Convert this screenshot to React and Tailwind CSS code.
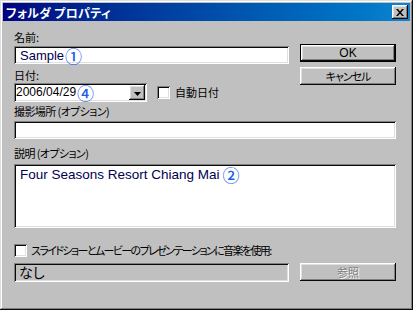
const sunken =
  "shadow-[inset_1px_1px_#808080,inset_-1px_-1px_#ffffff,inset_2px_2px_#0a0a0a,inset_-2px_-2px_#dfdfdf]";
const raised =
  "shadow-[inset_-1px_-1px_#0a0a0a,inset_1px_1px_#ffffff,inset_-2px_-2px_#808080,inset_2px_2px_#dfdfdf]";
const jp = "font-['Noto_Sans_CJK_JP',sans-serif] [font-feature-settings:'palt']";
const circ = "font-['Noto_Sans_CJK_JP',sans-serif] font-medium text-[#1f5fe8]";

function Checkbox() {
  return <div className={`w-[13px] h-[13px] bg-white shrink-0 ${sunken}`} />;
}

export default function App() {
  return (
    <div className="w-[413px] h-[310px] bg-[#c0c0c0] p-[3px] flex flex-col shadow-[inset_-1px_-1px_#0a0a0a,inset_1px_1px_#dfdfdf,inset_-2px_-2px_#808080,inset_2px_2px_#ffffff]">
      {/* Title bar */}
      <div className="h-[18px] flex items-center justify-between pl-[3px] pr-[2px] bg-linear-to-r from-[#000080] to-[#1084d0]">
        <span className={`${jp} text-white font-bold text-[12px] leading-[13px] tracking-[0.3px]`}>
          フォルダ プロパティ
        </span>
        <div className={`w-[16px] h-[14px] bg-[#c0c0c0] flex items-center justify-center ${raised}`}>
          <svg width="8" height="7" viewBox="0 0 8 7">
            <path d="M0 0h2l2 2.5L6 0h2L5 3.5 8 7H6L4 4.5 2 7H0l3-3.5z" fill="#000" />
          </svg>
        </div>
      </div>

      {/* Body */}
      <div className="flex-1 flex flex-col pl-[11px] pr-[14px] text-black">
        <div className="flex">
          <div className="w-[275px] flex flex-col">
            <div className={`${jp} mt-[10px] h-[13px] text-[11px] leading-[13px]`}>名前:</div>
            <div className={`mt-[2px] h-[18px] bg-white flex items-center pl-[6px] ${sunken}`}>
              <span className="font-['Liberation_Sans',sans-serif] text-[13px] text-[#000050] leading-[14px] mt-[2px]">
                Sample
              </span>
              <span className={`${circ} text-[17px] leading-[15px] ml-[1px]`}>①</span>
            </div>
            <div className={`${jp} mt-[5px] h-[13px] text-[11px] leading-[13px]`}>日付:</div>
            <div className="mt-[1px] flex items-center">
              <div className={`w-[133px] h-[19px] bg-white flex items-center justify-between pl-[2px] pr-[2px] ${sunken}`}>
                <div className="flex items-center">
                  <span className="font-['Liberation_Sans',sans-serif] text-[12px] leading-[13px]">2006/04/29</span>
                  <span className={`${circ} text-[17px] leading-[15px] ml-[1px]`}>④</span>
                </div>
                <div className={`w-[16px] h-[15px] bg-[#c0c0c0] flex items-end justify-center pb-[4px] ${raised}`}>
                  <svg width="7" height="4" viewBox="0 0 7 4">
                    <path d="M0 0h7L3.5 4z" fill="#000" />
                  </svg>
                </div>
              </div>
              <div className="ml-[10px]">
                <Checkbox />
              </div>
              <span className={`${jp} ml-[5px] text-[11px] leading-[13px]`}>自動日付</span>
            </div>
          </div>
          <div className="ml-[11px] w-[96px] pt-[23px] flex flex-col gap-[5px]">
            <div className="h-[18px] border border-black">
              <div className={`h-full bg-[#c0c0c0] flex items-center justify-center ${raised}`}>
                <span className="font-['Liberation_Sans',sans-serif] text-[12px] leading-[13px]">OK</span>
              </div>
            </div>
            <div className={`h-[18px] bg-[#c0c0c0] flex items-center justify-center ${raised}`}>
              <span className={`${jp} text-[11px] leading-[13px] tracking-[-1px]`}>キャンセル</span>
            </div>
          </div>
        </div>

        <div className={`${jp} mt-[3px] h-[13px] text-[11px] leading-[13px] tracking-[-0.6px]`}>撮影場所 (オプション)</div>
        <div className={`mt-[3px] h-[18px] bg-white ${sunken}`} />

        <div className={`${jp} mt-[8px] h-[13px] text-[11px] leading-[13px] tracking-[-0.6px]`}>説明 (オプション)</div>
        <div className={`mt-[4px] h-[64px] bg-white pl-[6px] pt-[3px] flex items-start ${sunken}`}>
          <span className="font-['Liberation_Sans',sans-serif] text-[13.5px] leading-[15px] text-[#000050]">
            Four Seasons Resort Chiang Mai
          </span>
          <span className={`${circ} text-[17px] leading-[15px] ml-[3px]`}>②</span>
        </div>

        <div className="mt-[16px] flex items-center">
          <Checkbox />
          <span className={`${jp} ml-[4px] text-[11px] leading-[13px] tracking-[-1.6px]`}>
            スライドショーとムービーのプレゼンテーションに音楽を使用:
          </span>
        </div>

        <div className="mt-[6px] flex">
          <div className={`w-[275px] h-[19px] bg-[#c0c0c0] flex items-center pl-[5px] ${sunken}`}>
            <span className={`${jp} text-[14px] leading-[15px]`}>なし</span>
          </div>
          <div className={`ml-[11px] w-[96px] h-[18px] bg-[#c0c0c0] flex items-center justify-center ${raised}`}>
            <span className={`${jp} text-[11px] leading-[13px] text-[#808080] [text-shadow:1px_1px_#ffffff]`}>参照</span>
          </div>
        </div>
      </div>
    </div>
  );
}
